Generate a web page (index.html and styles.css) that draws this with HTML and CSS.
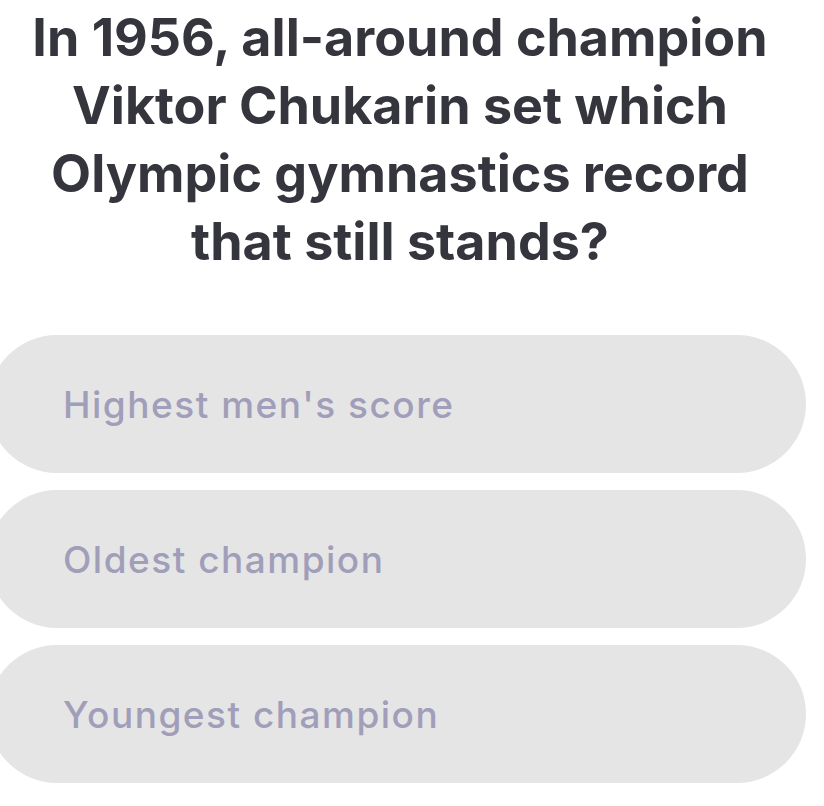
FILE: index.html
```html
<!DOCTYPE html>
<html lang="en">
<head>
    <meta charset="UTF-8">
    <meta name="viewport" content="width=device-width, initial-scale=1.0">
    <title>Trivia Question</title>
    <link rel="stylesheet" href="styles.css">
</head>
<body>

    <div class="quiz">
        <h1 class="question">In 1956, all-around champion Viktor Chukarin set which Olympic gymnastics record that still stands?</h1>

        <div class="answers">
            <div class="answer">Highest men's score</div>
            <div class="answer">Oldest champion</div>
            <div class="answer">Youngest champion</div>
        </div>
    </div>

</body>
</html>
```

FILE: styles.css
```css
body {
    margin: 0;
    padding: 0;
    background-color: #ffffff;
    font-family: Inter, "Noto Sans", sans-serif;
    overflow: hidden;
}
.quiz {
    width: 800px;
}
.question {
    margin: 0;
    padding: 4px 20px 0;
    text-align: center;
    font-size: 52px;
    line-height: 68px;
    font-weight: 700;
    letter-spacing: 0;
    color: #35353d;
}
.answers {
    display: flex;
    flex-direction: column;
    gap: 17px;
    margin-top: 59px;
    margin-left: -12px;
    width: 818px;
}
.answer {
    height: 138px;
    border-radius: 69px;
    background-color: #e5e5e5;
    display: flex;
    align-items: center;
    padding-left: 75px;
    font-size: 37px;
    font-weight: 500;
    letter-spacing: 1.5px;
    color: #a19eba;
}
```
